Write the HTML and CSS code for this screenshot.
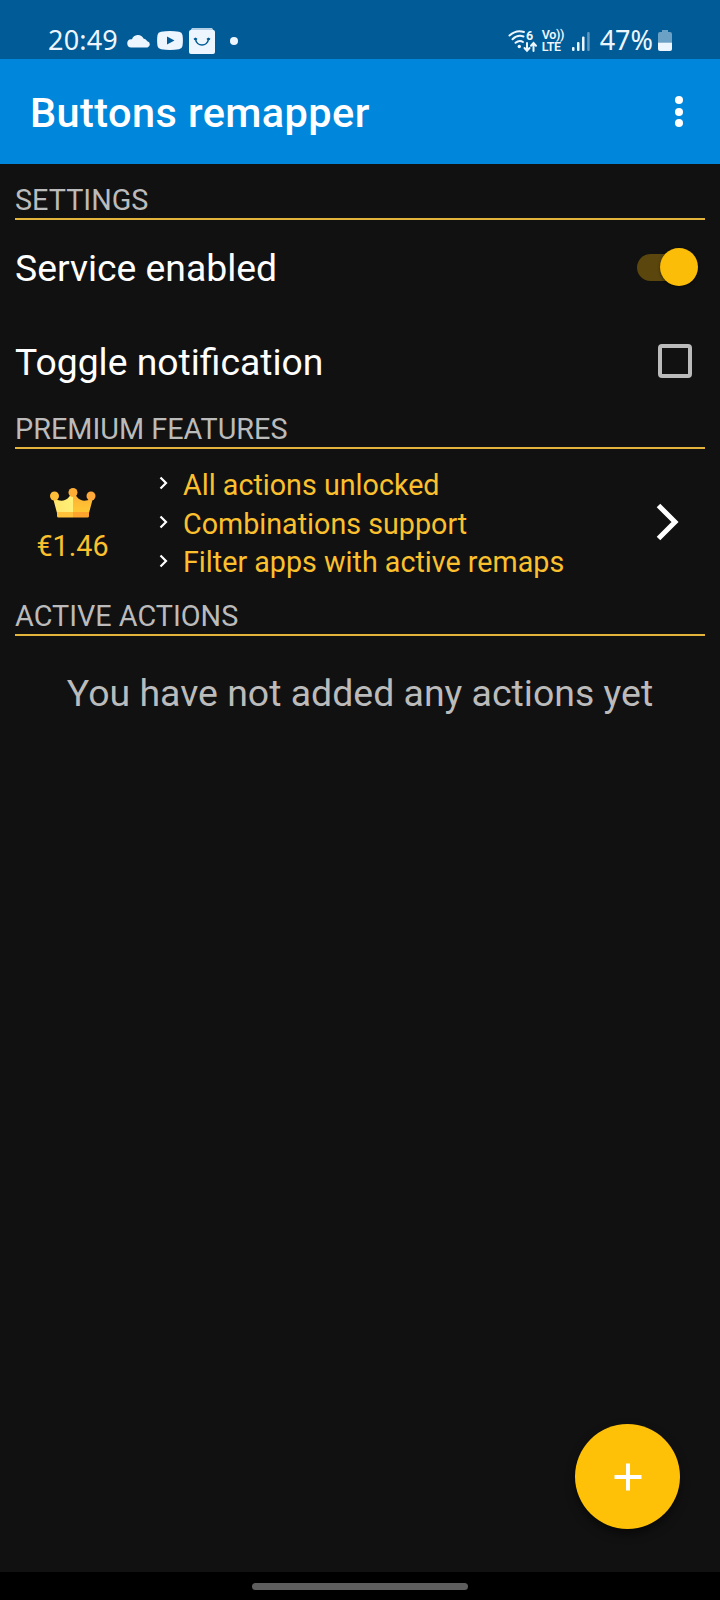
FILE: index.html
```html
<!DOCTYPE html>
<html lang="en">
<head>
  <title>Buttons remapper</title>
  <meta charset="UTF-8">
  <meta name="viewport" content="width=device-width, initial-scale=1">
  <link rel="stylesheet" href="styles.css">
</head>
<body>
  <div class="screen">
    <div class="status-bar">
      <div class="status-left">
        <span class="clock">20:49</span>
        <svg class="cloud" width="24" height="14" viewBox="0 0 24 14">
          <path d="M4.500 13.500a4 4 0 0 1-.3-8.200h.8A6.200 6.200 0 0 1 16.500 4.500a5 5 0 0 1 3.800 2.800A3.200 3.200 0 0 1 20.500 13.500z"/>
        </svg>
        <svg class="youtube" width="26" height="19" viewBox="0 0 26 19">
          <path fill-rule="evenodd" d="M4 .8Q13-.6 22 .8q3 .4 3.500 3.200.8 5.500 0 11-.5 2.800-3.500 3.200-9 1.400-18 0-3-.4-3.500-3.200-.8-5.500 0-11Q1 1.200 4 .8zM10 5.500v8l7.500-4z"/>
        </svg>
        <svg class="bag" width="26" height="26" viewBox="0 0 26 26">
          <path fill-opacity=".75" d="M3 0h20l2 3H1z"/>
          <rect y="2" width="26" height="24" rx="2"/>
          <path class="smile" d="M6.500 11c1 8 12 8 13 0M5 11.500l1.500-1 1.500 1M18 11.500l1.500-1 1.500 1"/>
        </svg>
        <span class="more-dot"></span>
      </div>
      <div class="status-right">
        <svg class="wifi" width="30" height="28" viewBox="0 -3 30 28">
          <g fill="none" stroke="currentColor" stroke-width="2" stroke-linecap="round">
            <path d="M1.500 5.500Q8.500-.8 16 2"/>
            <path d="M4.500 9.200Q9.500 4.300 15.500 6.500"/>
            <path d="M7.500 12.800q4-3.300 7.500-.8"/>
            <path d="M19 13v7.500M16.500 18l2.500 2.700 2.500-2.700M25.500 21v-7.500M23 15.700l2.500-2.700 2.500 2.700"/>
          </g>
          <circle cx="11.300" cy="16.500" r="1.700"/>
          <text x="18" y="9.500" class="wifi-gen">6</text>
        </svg>
        <div class="volte"><span>Vo))</span><span>LTE</span></div>
        <svg class="signal" width="18" height="20" viewBox="0 0 18 20">
          <rect x="0" y="16" width="2.500" height="4" rx="1"/>
          <rect x="5" y="11" width="2.500" height="9" rx="1"/>
          <rect x="10" y="5.500" width="2.500" height="14.500" rx="1"/>
          <rect x="15.200" y="1" width="2.500" height="19" rx="1" opacity=".4"/>
        </svg>
        <span class="battery-level">47%</span>
        <svg class="battery" width="14" height="21" viewBox="0 0 14 21">
          <path opacity=".45" d="M4 0h6v2h2q2 0 2 2v8.500H0V4q0-2 2-2h2z"/>
          <path d="M0 12.500h14V19q0 2-2 2H2q-2 0-2-2z"/>
        </svg>
      </div>
    </div>

    <div class="app-bar">
      <h1>Buttons remapper</h1>
      <button class="menu-btn" title="More options"><i></i><i></i><i></i></button>
    </div>

    <div class="content">
      <h2 class="section-title">SETTINGS</h2>
      <label class="setting-row">
        <span class="setting-name">Service enabled</span>
        <span class="toggle-switch"></span>
      </label>
      <label class="setting-row">
        <span class="setting-name">Toggle notification</span>
        <span class="checkbox"></span>
      </label>

      <h2 class="section-title">PREMIUM FEATURES</h2>
      <div class="premium">
        <div class="price">
          <svg class="crown" width="46" height="30" viewBox="0 0 46 30">
            <defs>
              <linearGradient id="crown-left" x1="0" y1="0" x2="1" y2="0">
                <stop offset="0" stop-color="#ffe36b"/>
                <stop offset="1" stop-color="#fff176"/>
              </linearGradient>
              <linearGradient id="crown-right" x1="0" y1="0" x2="0" y2="1">
                <stop offset="0" stop-color="#ffae35"/>
                <stop offset="1" stop-color="#ffc933"/>
              </linearGradient>
            </defs>
            <path fill="url(#crown-left)" d="M3 10Q13 16 19 9L22 5h1v20H7z"/>
            <path fill="url(#crown-right)" d="M23 5h1l3 4Q33 16 43 10L39 25H23z"/>
            <path fill="#ffc23a" d="M7 24h16v5.500H8.500Q7 29.500 7 28z"/>
            <path fill="#ffa52e" d="M23 24h16v4q0 1.500-1.500 1.500H23z"/>
            <circle cx="4.500" cy="8" r="4.500" fill="#ffbe3a"/>
            <circle cx="23" cy="4.500" r="4.500" fill="#ffae35"/>
            <circle cx="41" cy="8" r="4.500" fill="#ffa93a"/>
          </svg>
          <span>€1.46</span>
        </div>
        <ul class="features">
          <li><svg width="9" height="14" viewBox="0 0 9 14"><path d="M1.500 1.500 7 7l-5.500 5.500"/></svg>All actions unlocked</li>
          <li><svg width="9" height="14" viewBox="0 0 9 14"><path d="M1.500 1.500 7 7l-5.500 5.500"/></svg>Combinations support</li>
          <li><svg width="9" height="14" viewBox="0 0 9 14"><path d="M1.500 1.500 7 7l-5.500 5.500"/></svg>Filter apps with active remaps</li>
        </ul>
        <svg class="arrow" width="24" height="38" viewBox="0 0 24 38">
          <path d="M2.500 2.500 19 19 2.500 35.500"/>
        </svg>
      </div>

      <h2 class="section-title">ACTIVE ACTIONS</h2>
      <p class="empty">You have not added any actions yet</p>
    </div>

    <button class="fab" title="Add action">
      <svg width="28" height="28" viewBox="0 0 28 28"><path d="M14 .5v27M.5 14h27"/></svg>
    </button>

    <div class="nav-bar"><div class="nav-handle"></div></div>
  </div>
</body>
</html>
```

FILE: styles.css
```css
* {
  box-sizing: border-box;
}
body {
  margin: 0;
  background-color: #111;
  font-family: Roboto, sans-serif;
  color: #fff;
}
button {
  border: none;
  padding: 0;
  cursor: pointer;
}
.screen {
  position: relative;
  display: flex;
  flex-direction: column;
  width: 720px;
  height: 1600px;
  overflow: hidden;
}

/* Status bar */
.status-bar {
  display: flex;
  justify-content: space-between;
  height: 59px;
  padding: 20px 48px 0 48px;
  background-color: #005b96;
  color: #edf6ff;
  font-family: "Noto Sans", sans-serif;
  font-size: 27px;
}
.status-bar svg {
  fill: currentColor;
}
.status-left,
.status-right {
  display: flex;
  align-items: center;
  height: 41px;
}
.clock,
.battery-level {
  line-height: 39px;
  padding-bottom: 2px;
}
.clock {
  letter-spacing: 0.2px;
}
.cloud {
  margin-left: 9px;
}
.youtube {
  margin-left: 6px;
}
.bag {
  margin-left: 6px;
}
.bag .smile {
  fill: none;
  stroke: #005b96;
  stroke-width: 1.6;
}
.more-dot {
  width: 8px;
  height: 8px;
  margin-left: 15px;
  border-radius: 50%;
  background-color: currentColor;
}
.wifi-gen {
  font-family: Roboto, sans-serif;
  font-size: 12.5px;
  font-weight: 700;
}
.volte {
  display: flex;
  flex-direction: column;
  width: 22px;
  margin-left: 4px;
  font-family: Roboto, sans-serif;
  font-size: 12.5px;
  font-weight: 600;
  letter-spacing: -0.3px;
  line-height: 12px;
}
.volte span {
  height: 12px;
}
.signal {
  margin-left: 8px;
}
.battery-level {
  margin-left: 10px;
}
.battery {
  margin-left: 5px;
}

/* App bar */
.app-bar {
  display: flex;
  align-items: center;
  justify-content: space-between;
  height: 105px;
  padding: 0 37px 0 30px;
  background-color: #0087db;
}
h1 {
  margin: 0;
  padding-top: 2px;
  font-size: 41.5px;
  font-weight: 500;
  letter-spacing: 0.4px;
  line-height: 48px;
}
.menu-btn {
  display: flex;
  flex-direction: column;
  gap: 3.4px;
  background: none;
}
.menu-btn i {
  width: 8px;
  height: 8px;
  border-radius: 50%;
  background-color: #fff;
}

/* Settings list */
.content {
  flex: 1;
  padding: 16px 15px 0;
}
.section-title {
  height: 40px;
  margin: 0;
  border-bottom: 2px solid #e3b43c;
  color: #bbb;
  font-size: 28.8px;
  font-weight: 400;
  line-height: 40px;
}
.setting-row {
  display: flex;
  align-items: center;
  justify-content: space-between;
  height: 94px;
}
.setting-row + .section-title {
  margin-top: 1px;
}
.setting-name {
  padding-top: 2px;
  font-size: 37.3px;
}
.toggle-switch {
  position: relative;
  width: 54px;
  height: 27px;
  margin-right: 14px;
  border-radius: 14px;
  background-color: #5b470d;
}
.toggle-switch:before {
  position: absolute;
  content: "";
  top: -6px;
  right: -7px;
  width: 38px;
  height: 38px;
  border-radius: 50%;
  background-color: #fbbd08;
  box-shadow: 0 1px 3px rgba(0,0,0,0.5);
}
.checkbox {
  width: 34px;
  height: 34px;
  margin-right: 13px;
  border: 4px solid #bbb;
  border-radius: 4px;
}

/* Premium block */
.premium {
  display: flex;
  align-items: center;
  height: 147px;
  color: #fbc02d;
  font-size: 28.7px;
}
.price {
  display: flex;
  flex-direction: column;
  align-items: center;
  gap: 11px;
  width: 115px;
  padding-top: 6px;
}
.features {
  flex: 1;
  margin: 0;
  padding: 3px 0 0 29px;
  list-style: none;
}
.features li {
  display: flex;
  align-items: center;
  gap: 15px;
  line-height: 38.67px;
}
.features svg {
  margin-bottom: 4px;
}
.features svg,
.arrow,
.fab svg {
  fill: none;
  stroke: #fff;
}
.features svg {
  stroke-width: 2.2;
}
.arrow {
  margin-right: 25px;
  margin-bottom: 2px;
  stroke-width: 5;
}
.empty {
  margin: 35px 0 0;
  color: #bbb;
  font-size: 37.45px;
  line-height: 44px;
  text-align: center;
}

/* Add button floats over the list */
.fab {
  position: absolute;
  right: 40px;
  bottom: 71px;
  display: flex;
  align-items: center;
  justify-content: center;
  width: 105px;
  height: 105px;
  border-radius: 50%;
  background-color: #ffc107;
  box-shadow: 0 5px 10px rgba(0,0,0,0.5);
}
.fab svg {
  stroke-width: 4;
}

/* System navigation */
.nav-bar {
  display: flex;
  justify-content: center;
  height: 28px;
  padding-top: 11px;
  background-color: #000;
}
.nav-handle {
  width: 216px;
  height: 7px;
  border-radius: 4px;
  background-color: #5e5e5e;
}
```
